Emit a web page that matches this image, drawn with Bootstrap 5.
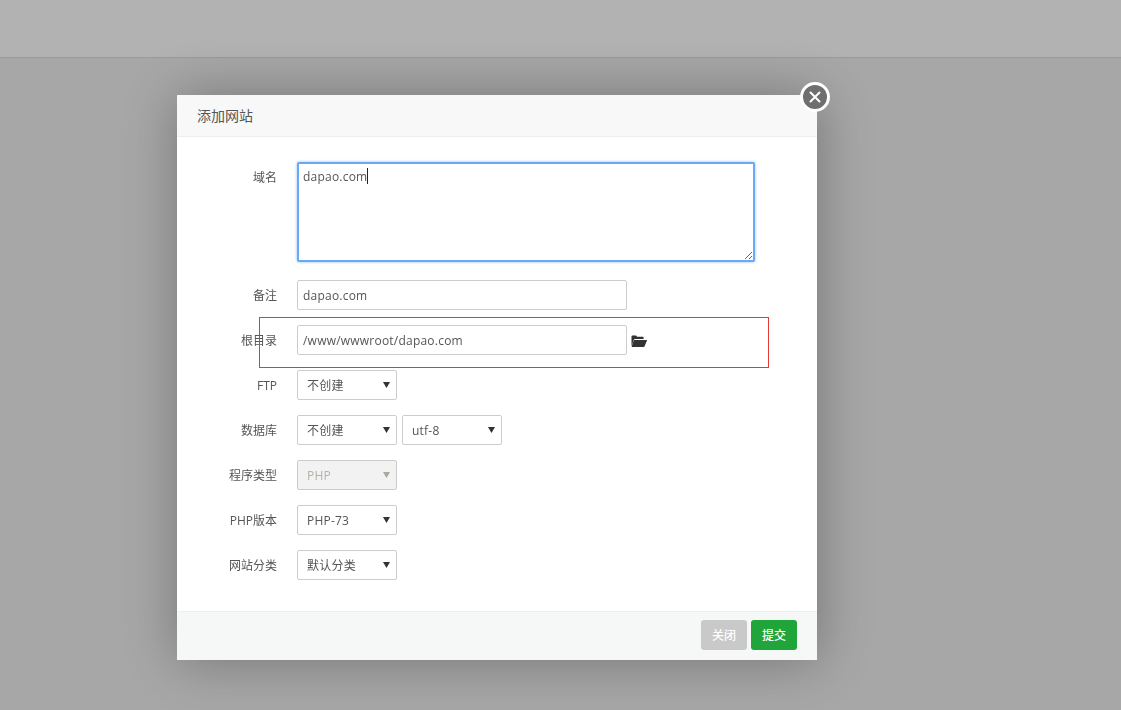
<!DOCTYPE html>
<html lang="zh">
<head>
<meta charset="utf-8">
<title>添加网站</title>
<link href="https://cdn.jsdelivr.net/npm/bootstrap@5.3.0/dist/css/bootstrap.min.css" rel="stylesheet">
<style>
html,body{height:100%;overflow:hidden}
body{background:#f0f0f0;font-family:"Open Sans","Noto Sans CJK SC",sans-serif;font-size:12px;color:#555}
.top-strip{height:58px;background:#fff;border-bottom:1px solid #ddd}
.dim-layer{position:fixed;inset:0;background:rgba(0,0,0,.3)}
.site-dialog{position:absolute;left:177px;top:95px;width:640px;height:565px;border:0;border-radius:0;box-shadow:1px 1px 50px rgba(0,0,0,.3);background:#fff}
.site-dialog .card-header{height:42px;padding:0 20px;line-height:41px;background:#f8f8f8;border-bottom:1px solid #eee;border-radius:0;font-size:14px;color:#555}
.site-dialog .card-body{padding:25px 0 0;gap:15px}
.close-disc{position:absolute;left:623px;top:-13px;width:30px;height:30px;border-radius:50%;background:#6f6f6f;border:3px solid #fff;padding:0;display:flex;align-items:center;justify-content:center}
.form-line{display:flex;align-items:flex-start;gap:20px;position:relative}
.form-line label{width:100px;height:30px;text-align:right;line-height:30px;padding-top:1px;flex:none;font-size:12px;color:#555}
.site-dialog .form-control,.site-dialog .form-select{height:30px;border:1px solid #ccc;border-radius:2px;font-size:12px;letter-spacing:.22px;color:#555;padding:1px 5px 0;box-shadow:none;line-height:28px}
.site-dialog .form-control.w-path{width:330px}
.site-dialog textarea.form-control{width:458px;height:100px;border:2px solid #69a9f8;padding:3px 4px;line-height:20px;box-shadow:0 0 3px rgba(82,168,236,.7);border-radius:2px;resize:both;min-height:100px;margin-bottom:3px}
.site-dialog .form-select{width:100px;padding:1px 9px 0;background-image:url("data:image/svg+xml,%3Csvg xmlns='http://www.w3.org/2000/svg' viewBox='0 0 7 6'%3E%3Cpath fill='%23333' d='M0 0h7L3.5 6z'/%3E%3C/svg%3E");background-size:7px 6px;background-position:right 6px center}
.site-dialog .form-select:disabled{background-color:#f2f2f2;color:#b3b3a8;background-image:url("data:image/svg+xml,%3Csvg xmlns='http://www.w3.org/2000/svg' viewBox='0 0 7 6'%3E%3Cpath fill='%23aaa99c' d='M0 0h7L3.5 6z'/%3E%3C/svg%3E")}
.text-caret{position:absolute;left:190px;top:6px;width:1px;height:16px;background:#222}
.red-frame{position:absolute;left:82px;top:-8px;width:510px;height:51px;border:1px solid #e53935;pointer-events:none}
.folder-glyph{width:16px;height:12px;margin:10px 0 0 -16px}
.site-dialog .card-footer{margin-top:auto;height:49px;padding:8px 20px 0;background:#f6f8f8;border-top:1px solid #eee;border-radius:0;gap:4px}
.site-dialog .btn{width:46px;height:30px;padding:1px 0 0;font-size:12px;font-weight:500;line-height:30px;border:0;border-radius:3px;color:#fff}
.btn-shut{background:#c9c9c9}
.btn-send{background:#20a53a}
</style>
</head>
<body>
<div class="top-strip"></div>
<div class="dim-layer"></div>
<div class="card site-dialog">
  <div class="card-header">添加网站</div>
  <button type="button" class="close-disc" aria-label="关闭">
    <svg width="12" height="12" viewBox="0 0 12 12"><path d="M1.5 1.5l9 9M10.500 1.5l-9 9" stroke="#fff" stroke-width="2" stroke-linecap="round"/></svg>
  </button>
  <div class="card-body d-flex flex-column">
    <div class="form-line">
      <label>域名</label>
      <textarea class="form-control">dapao.com</textarea>
      <span class="text-caret"></span>
    </div>
    <div class="form-line">
      <label>备注</label>
      <input class="form-control w-path" value="dapao.com">
    </div>
    <div class="form-line">
      <label>根目录</label>
      <input class="form-control w-path" value="/www/wwwroot/dapao.com">
      <svg class="folder-glyph" viewBox="0 0 16 12"><path fill="#333" d="M0.5 11V1.6C0.5 1 1 .5 1.6 .5H5l1.2 1.3h5.4c.6 0 1 .4 1 1V4H4.2c-.7 0-1.2.3-1.500 1zM3.6 5h11.8c.5 0 .7.3.5.7l-2.300 5.600c-.1.4-.5.7-1 .7H1.200c-.5 0-.7-.3-.5-.7l2-5.600c.2-.4.5-.7.9-.7z"/></svg>
      <span class="red-frame"></span>
    </div>
    <div class="form-line">
      <label>FTP</label>
      <select class="form-select"><option>不创建</option></select>
    </div>
    <div class="form-line">
      <label>数据库</label>
      <div class="d-flex" style="gap:5px">
        <select class="form-select"><option>不创建</option></select>
        <select class="form-select"><option>utf-8</option></select>
      </div>
    </div>
    <div class="form-line">
      <label>程序类型</label>
      <select class="form-select" disabled><option>PHP</option></select>
    </div>
    <div class="form-line">
      <label>PHP版本</label>
      <select class="form-select"><option>PHP-73</option></select>
    </div>
    <div class="form-line">
      <label>网站分类</label>
      <select class="form-select"><option>默认分类</option></select>
    </div>
  </div>
  <div class="card-footer d-flex justify-content-end">
    <button type="button" class="btn btn-shut">关闭</button>
    <button type="button" class="btn btn-send">提交</button>
  </div>
</div>
</body>
</html>
